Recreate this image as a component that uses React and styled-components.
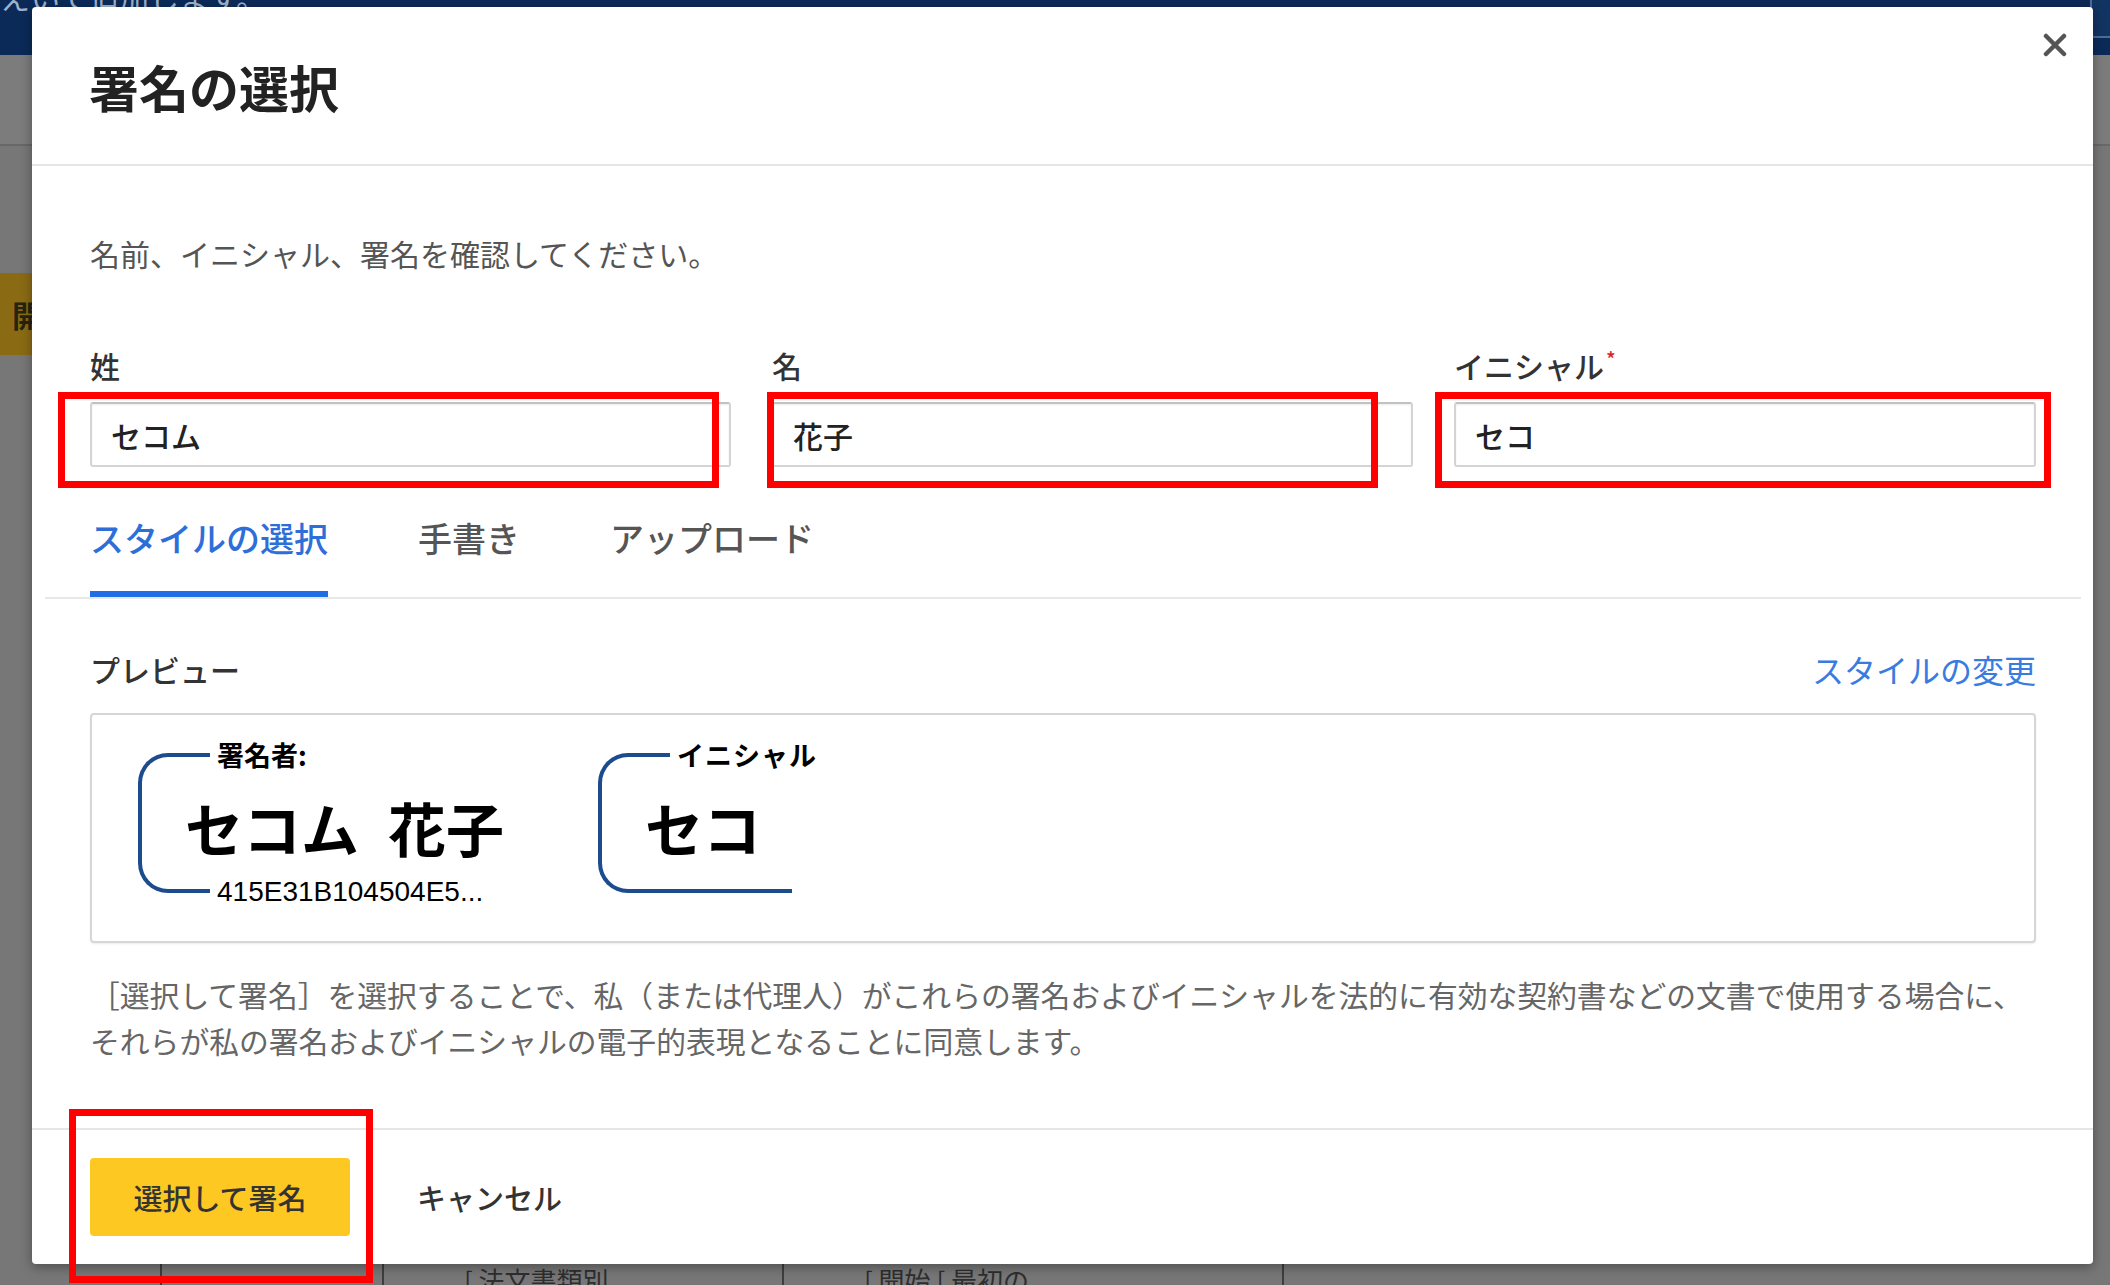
import React from 'react';
import styled, { createGlobalStyle, css } from 'styled-components';

const GlobalStyle = createGlobalStyle`
	html, body {
		margin: 0;
		padding: 0;
	}
	body {
		font-family: 'Noto Sans CJK JP', 'Noto Sans', sans-serif;
		background: #777777;
	}
	*, *::before, *::after {
		box-sizing: border-box;
	}
`;

const fields = [
	{ id: 'last', label: '姓', value: 'セコム' },
	{ id: 'first', label: '名', value: '花子' },
	{ id: 'initials', label: 'イニシャル', value: 'セコ', required: true },
];

const tabs = ['スタイルの選択', '手書き', 'アップロード'];

// red annotation frames drawn over the screenshot
const marks = [
	{ left: 58, top: 392, width: 661, height: 96 },
	{ left: 767, top: 392, width: 611, height: 96 },
	{ left: 1435, top: 392, width: 616, height: 96 },
	{ left: 69, top: 1109, width: 304, height: 174 },
];

export default function App() {
	return (
		<>
			<GlobalStyle />
			<Page>
				{/* dimmed page behind the dialog */}
				<Backdrop>
					<TopBar>
						<TopText>えいて追加します。</TopText>
						<TopChip />
					</TopBar>
					<SubBar />
					<BackButton>開始</BackButton>
					<BackSpacer />
					<BackRow>
						<BackCell $w={162} />
						<BackCell $w={222} />
						<BackCell $w={400}>[ 法文書類別</BackCell>
						<BackCell $w={500}>[ 開始 [ 最初の</BackCell>
					</BackRow>
				</Backdrop>

				<Modal>
					<Header>
						<Title>署名の選択</Title>
						<Close aria-label='close'>
							<svg width='24' height='24' viewBox='0 0 24 24'>
								<path
									d='M3 3 L21 21 M21 3 L3 21'
									stroke='#555'
									strokeWidth='4.5'
									strokeLinecap='round'
								/>
							</svg>
						</Close>
					</Header>

					<Body>
						<Intro>名前、イニシャル、署名を確認してください。</Intro>

						<Fields>
							{fields.map(f => (
								<Field key={f.id}>
									<Label>
										{f.label}
										{f.required && <Req>*</Req>}
									</Label>
									<Input readOnly value={f.value} />
								</Field>
							))}
						</Fields>

						<TabBar>
							{tabs.map((t, i) => (
								<Tab key={t} $active={i === 0}>
									{t}
								</Tab>
							))}
						</TabBar>

						<PreviewHead>
							<PreviewLabel>プレビュー</PreviewLabel>
							<ChangeLink>スタイルの変更</ChangeLink>
						</PreviewHead>

						<PreviewBox>
							<SigBlock $tail={0}>
								<SigLabel>署名者:</SigLabel>
								<SigName>セコム&ensp;花子</SigName>
								<SigHash>415E31B104504E5...</SigHash>
							</SigBlock>
							<SigBlock $tail={122}>
								<SigLabel $spaced>イニシャル</SigLabel>
								<SigName>セコ</SigName>
							</SigBlock>
						</PreviewBox>

						<Legal>
							［選択して署名］を選択することで、私（または代理人）がこれらの署名およびイニシャルを法的に有効な契約書などの文書で使用する場合に、
							<br />
							それらが私の署名およびイニシャルの電子的表現となることに同意します。
						</Legal>
					</Body>

					<Footer>
						<PrimaryButton>選択して署名</PrimaryButton>
						<TextButton>キャンセル</TextButton>
					</Footer>
				</Modal>

				{marks.map((m, i) => (
					<Mark
						key={i}
						style={{ left: m.left, top: m.top, width: m.width, height: m.height }}
					/>
				))}
			</Page>
		</>
	);
}

// PAGE

const Page = styled.div`
	position: relative;
	width: 2110px;
	height: 1285px;
	overflow: hidden;
	background: #777777;
`;

const Backdrop = styled.div`
	display: flex;
	flex-direction: column;
	height: 100%;
`;

const TopBar = styled.div`
	height: 55px;
	flex-shrink: 0;
	background: #0b2a58;
	display: flex;
	justify-content: space-between;
	align-items: flex-start;
	overflow: hidden;
`;

const TopText = styled.span`
	margin-top: -19px;
	font-size: 30px;
	line-height: 30px;
	color: #9fb2cc;
	white-space: nowrap;
`;

const TopChip = styled.span`
	width: 40px;
	height: 38px;
	margin-right: -20px;
	border: 2px solid #4d6d96;
	border-top: none;
	border-radius: 0 0 0 4px;
	background: #123462;
`;

const SubBar = styled.div`
	height: 91px;
	flex-shrink: 0;
	background: #7c7c7c;
	border-bottom: 2px solid #686868;
`;

const BackButton = styled.div`
	margin-top: 127px;
	width: 200px;
	height: 82px;
	flex-shrink: 0;
	padding-left: 12px;
	display: flex;
	align-items: center;
	background: #8a6b14;
	color: #262410;
	font-size: 30px;
	font-weight: 700;
`;

const BackSpacer = styled.div`
	flex: 1;
`;

const BackRow = styled.div`
	height: 22px;
	flex-shrink: 0;
	display: flex;
	overflow: hidden;
`;

const BackCell = styled.div`
	width: ${p => p.$w}px;
	padding: 4px 0 0 80px;
	border-right: 2px solid #3e3e3e;
	font-size: 26px;
	line-height: 26px;
	color: #2e2e2e;
	white-space: nowrap;
	overflow: hidden;
`;

const Mark = styled.div`
	position: absolute;
	border: 7px solid #ff0000;
	pointer-events: none;
`;

// DIALOG

const Modal = styled.section`
	position: absolute;
	left: 32px;
	top: 7px;
	width: 2061px;
	height: 1257px;
	background: #ffffff;
	border-radius: 4px;
	box-shadow: 0 3px 12px rgba(0, 0, 0, 0.35);
	display: flex;
	flex-direction: column;

	& > * {
		flex-shrink: 0;
	}
`;

const Header = styled.header`
	height: 159px;
	padding: 0 26px 0 57px;
	border-bottom: 2px solid #e6e6e6;
	display: flex;
	justify-content: space-between;
	align-items: center;
`;

const Title = styled.h2`
	margin: 0;
	font-size: 50px;
	font-weight: 700;
	color: #222222;
`;

const Close = styled.button`
	align-self: flex-start;
	margin-top: 26px;
	padding: 0;
	border: none;
	background: none;
	line-height: 0;
	cursor: pointer;
`;

const Body = styled.div`
	padding: 65px 57px 65px 58px;
	border-bottom: 2px solid #e6e6e6;
`;

const Intro = styled.p`
	margin: 0;
	font-size: 30px;
	line-height: 44px;
	color: #555555;
`;

// FORM

const Fields = styled.div`
	margin-top: 68px;
	display: grid;
	grid-template-columns: 641px 641px 1fr;
	column-gap: 41px;
`;

const Field = styled.div`
	display: flex;
	flex-direction: column;
	gap: 15px;
`;

const Label = styled.label`
	font-size: 30px;
	line-height: 44px;
	font-weight: 500;
	color: #333333;
`;

const Req = styled.sup`
	font-size: 20px;
	line-height: 0;
	color: #d9262c;
	margin-left: 2px;
`;

const Input = styled.input`
	height: 65px;
	width: 100%;
	padding: 0 19px;
	border: 2px solid #d4d4d4;
	border-top-color: #c2c2c2;
	border-radius: 3px;
	box-shadow: inset 0 1px 2px rgba(0, 0, 0, 0.08);
	font: inherit;
	font-size: 30px;
	font-weight: 500;
	color: #222222;
	outline: none;
`;

// TABS

const TabBar = styled.nav`
	margin: 48px -45px 0;
	padding: 0 45px;
	display: flex;
	gap: 90px;
	border-bottom: 2px solid #e8e8e8;
`;

const Tab = styled.div`
	font-size: 34px;
	line-height: 46px;
	font-weight: 500;
	padding-bottom: 30px;
	border-bottom: 6px solid transparent;
	color: #555555;
	cursor: pointer;
	${p =>
		p.$active &&
		css`
			color: #2d6ed8;
			border-bottom-color: #1f6ee6;
		`}
`;

// PREVIEW

const PreviewHead = styled.div`
	margin-top: 48px;
	display: flex;
	justify-content: space-between;
	align-items: center;
	line-height: 44px;
`;

const PreviewLabel = styled.span`
	font-size: 30px;
	font-weight: 500;
	color: #333333;
`;

const ChangeLink = styled.a`
	font-size: 32px;
	color: #3a7be0;
	cursor: pointer;
`;

const PreviewBox = styled.div`
	margin-top: 22px;
	padding: 38px 46px 48px;
	border: 2px solid #d6d6d6;
	border-radius: 4px;
	box-shadow: 0 1px 2px rgba(0, 0, 0, 0.08);
	display: flex;
	align-items: flex-start;
	gap: 94px;
`;

const SigBlock = styled.div`
	position: relative;
	height: 140px;
	padding-left: 79px;
	display: grid;
	grid-template-rows: 17px 106px 17px;
	color: #000000;

	&::before {
		content: '';
		position: absolute;
		left: 0;
		top: 0;
		width: 72px;
		height: 140px;
		border: 4px solid #1c4b8e;
		border-right: none;
		border-radius: 30px 0 0 30px;
	}

	&::after {
		content: '';
		position: absolute;
		left: 72px;
		top: 136px;
		height: 4px;
		width: ${p => p.$tail}px;
		background: #1c4b8e;
	}
`;

const SigLabel = styled.div`
	margin-top: -13px;
	font-size: 27px;
	line-height: 30px;
	font-weight: 700;
	white-space: nowrap;
	letter-spacing: ${p => (p.$spaced ? '1px' : '0')};
`;

const SigName = styled.div`
	align-self: center;
	margin-left: -32px;
	padding-top: 8px;
	font-size: 58px;
	line-height: 70px;
	font-weight: 700;
	white-space: nowrap;
`;

const SigHash = styled.div`
	margin-top: 1px;
	margin-bottom: -14px;
	font-family: 'Liberation Sans', Arial, sans-serif;
	font-size: 28px;
	line-height: 30px;
	white-space: nowrap;
`;

const Legal = styled.p`
	margin: 28px -40px 0 0;
	font-size: 29.8px;
	line-height: 46px;
	color: #666666;
`;

// FOOTER

const Footer = styled.footer`
	padding: 28px 58px;
	display: flex;
	align-items: center;
	gap: 67px;
`;

const PrimaryButton = styled.button`
	width: 260px;
	height: 78px;
	border: none;
	border-radius: 4px;
	background: #fdc822;
	font: inherit;
	font-size: 29px;
	font-weight: 500;
	color: #333333;
	cursor: pointer;
`;

const TextButton = styled.button`
	padding: 0;
	border: none;
	background: none;
	font: inherit;
	font-size: 29px;
	font-weight: 500;
	color: #333333;
	cursor: pointer;
`;
